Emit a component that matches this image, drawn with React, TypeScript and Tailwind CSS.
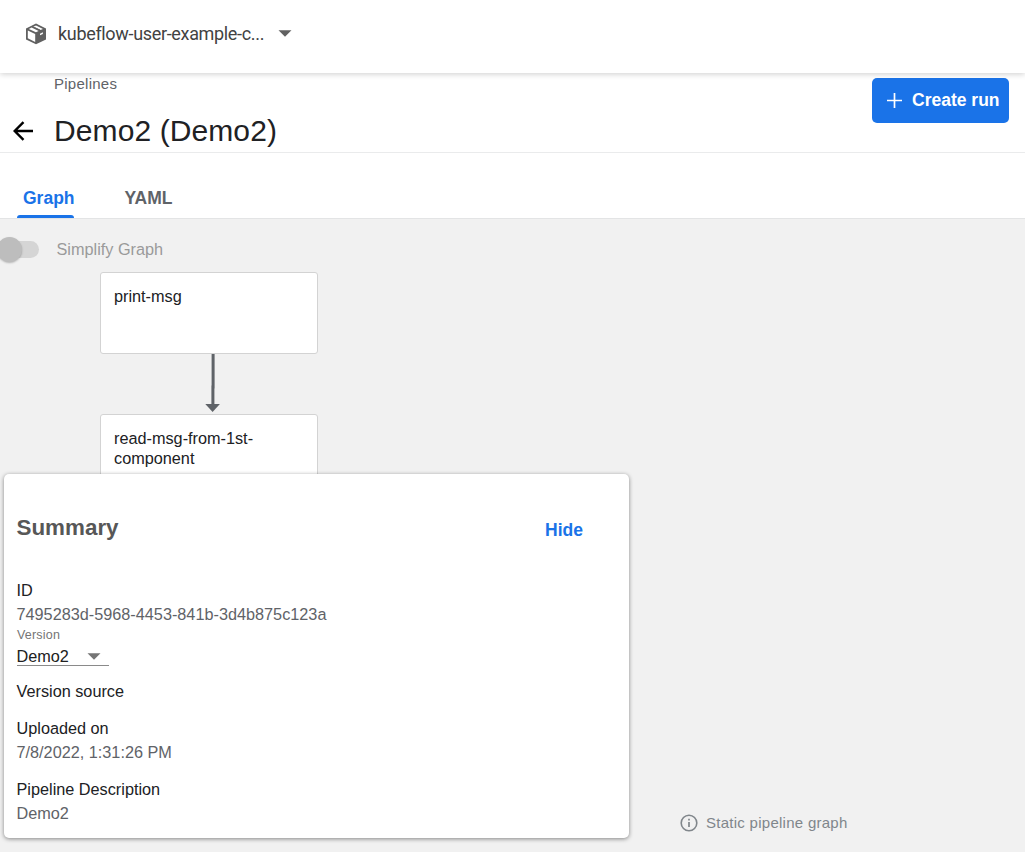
import type { ReactNode } from "react";

function PackageIcon() {
  return (
    <svg width="22" height="22" viewBox="0 0 22 22" className="shrink-0">
      <path d="M11 0.6 21 5.4V16.4L11 21.3 1 16.4V5.4Z" fill="#616161" />
      <path d="M2.8 7.6 10.2 11.1V18.9L2.8 15.3Z" fill="#fff" />
      <path d="M3.8 5.9 6.6 4.6 13.6 8 10.9 9.3Z" fill="#fff" />
      <path d="M8.4 3.8 11 2.5 18 5.9 15.5 7.1Z" fill="#fff" />
      <path d="M8.6 4.4 9.6 3.9 15.4 6.8 14.4 7.3Z" fill="#616161" />
      <path d="M15 10.7 17.9 9.3V10.9L15 12.3Z" fill="#fff" />
    </svg>
  );
}

function Caret({ color }: { color: string }) {
  return (
    <svg width="14" height="7" viewBox="0 0 14 7" className="shrink-0">
      <path d="M0.5 0.3h13L7 6.7z" fill={color} />
    </svg>
  );
}

function GraphNode({ children }: { children: ReactNode }) {
  return (
    <div className="h-[82px] w-[218px] rounded-[3px] border border-[#d3d3d3] bg-white px-[13px] pt-[13px] text-[16.25px] leading-5 text-[#202124]">
      {children}
    </div>
  );
}

function Field({ label, value }: { label: string; value?: string }) {
  return (
    <div className="mb-[13px] leading-6">
      <div className="text-[#202124]">{label}</div>
      {value && <div className="text-[#5f6368]">{value}</div>}
    </div>
  );
}

export default function App() {
  return (
    <div className="flex h-[852px] w-[1025px] flex-col overflow-hidden bg-white font-['Liberation_Sans',Arial,sans-serif]">
      <header className="relative z-10 flex h-[73px] shrink-0 items-center bg-white pb-[6px] pl-[25px] shadow-[0_1px_6px_rgba(0,0,0,0.2)]">
        <PackageIcon />
        <span className="ml-[11px] w-[220px] whitespace-nowrap font-[Roboto,sans-serif] text-[18px] tracking-[-0.33px] text-[#424242]">
          kubeflow-user-example-c...
        </span>
        <Caret color="#616161" />
      </header>

      <div className="flex h-20 shrink-0 justify-between border-b border-[#eaebec] pr-4">
        <div>
          <div className="pl-[54px] pt-px text-[15px] leading-5 tracking-[0.26px] text-[#5f6368]">Pipelines</div>
          <div className="mt-[17px] flex h-10 items-center pl-[13px]">
            <svg width="21" height="20" viewBox="0 0 21 20">
              <path d="M20 10H2M10.5 1.2 1.7 10l8.8 8.8" fill="none" stroke="#000" strokeWidth="2.4" />
            </svg>
            <h1 className="ml-5 whitespace-nowrap text-[30px] leading-10 tracking-[0.1px] text-[#202124]">Demo2 (Demo2)</h1>
          </div>
        </div>
        <button className="mt-[5px] flex h-[45px] w-[137px] items-center rounded-[5px] bg-[#1a73e8] pl-[15px] text-[17.5px] font-bold text-white">
          <svg width="15" height="15" viewBox="0 0 15 15" className="mr-[10px] shrink-0">
            <path d="M7.5 0v15M0 7.5h15" stroke="#fff" strokeWidth="1.7" />
          </svg>
          <span className="whitespace-nowrap">Create run</span>
        </button>
      </div>

      <nav className="flex h-[66px] shrink-0 items-end border-b border-[#e3e4e5] pl-[17px] text-[17.5px] font-bold leading-5">
        <div className="flex w-[107.5px] flex-col text-[#1a73e8]">
          <span className="pl-[6px]">Graph</span>
          <div className="mt-[7px] h-[3px] w-[57px] rounded-t-[3px] bg-[#1a73e8]" />
        </div>
        <span className="pb-[10px] text-[#5f6368]">YAML</span>
      </nav>

      <main className="relative flex-1 bg-[#f1f1f1]">
        <div className="flex h-[53px] items-center pt-[7px]">
          <div className="relative h-[17px] w-[39px] rounded-r-full bg-[#d5d5d5]">
            <div className="absolute left-[-3px] top-[-4px] size-[25px] rounded-full bg-[#bdbdbd] shadow-[0_1px_2px_rgba(0,0,0,0.25)]" />
          </div>
          <span className="ml-[17.5px] text-[16.25px] text-[#9a9a9a]">Simplify Graph</span>
        </div>
        <div className="ml-[100px] flex w-[218px] flex-col">
          <GraphNode>print-msg</GraphNode>
          <svg width="218" height="60" viewBox="0 0 218 60">
            <path d="M113.1 0V33H112.9V51" fill="none" stroke="#5f6368" strokeWidth="3" />
            <path d="M105.3 50h14.6l-7.3 8z" fill="#5f6368" />
          </svg>
          <GraphNode>read-msg-from-1st-component</GraphNode>
        </div>

        <section className="absolute left-1 top-[255px] h-[364px] w-[625px] rounded-[5px] bg-white px-[12.5px] text-[16.25px] shadow-[0_1px_4px_rgba(0,0,0,0.45)]">
          <div className="flex items-start justify-between pr-[33.5px] pt-[39px] font-bold">
            <h2 className="text-[22.4px] leading-[30px] text-[#575757]">Summary</h2>
            <button className="pt-0.5 text-[17.5px] leading-[30px] text-[#1a73e8]">Hide</button>
          </div>
          <div className="pt-[33px]">
            <div className="leading-6 text-[#202124]">ID</div>
            <div className="leading-6 text-[#5f6368]">7495283d-5968-4453-841b-3d4b875c123a</div>
            <div className="pl-[0.5px] text-[12.5px] leading-4 tracking-[0.2px] text-[#757575]">
              <span className="relative top-px">Version</span>
            </div>
            <div className="mb-[13px] flex h-[24px] w-[92px] items-center border-b border-[#8a8a8a] text-[#212121]">
              <span className="w-[70px] pt-[5px]">Demo2</span>
              <div className="pt-[5px]">
                <Caret color="#757575" />
              </div>
            </div>
            <Field label="Version source" />
            <Field label="Uploaded on" value="7/8/2022, 1:31:26 PM" />
            <Field label="Pipeline Description" value="Demo2" />
          </div>
        </section>

        <div className="absolute left-[680px] top-[594px] flex items-center text-[15px] leading-5 tracking-[0.27px] text-[#80868b]">
          <svg width="18" height="18" viewBox="0 0 18 18" className="mr-2">
            <circle cx="9" cy="9" r="7.8" fill="none" stroke="#80868b" strokeWidth="1.6" />
            <path d="M9 8v5M9 4.7v1.7" stroke="#80868b" strokeWidth="1.7" />
          </svg>
          Static pipeline graph
        </div>
      </main>
    </div>
  );
}
